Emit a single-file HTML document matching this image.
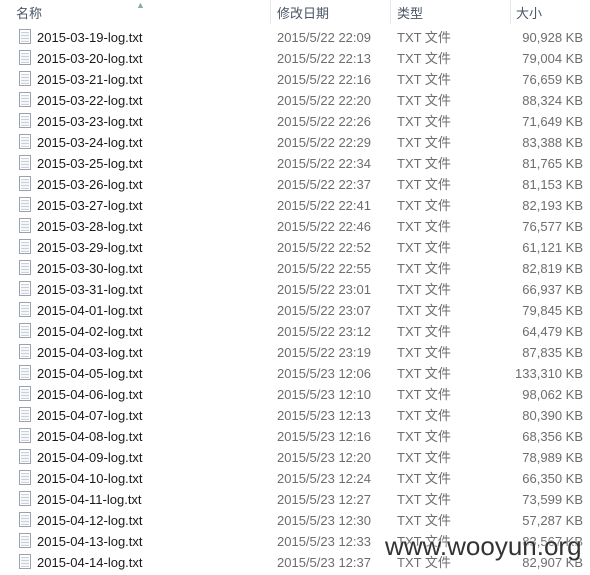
<!DOCTYPE html><html><head><style>
body{margin:0;width:590px;height:575px;background:#fff;overflow:hidden;position:relative;font-family:"Liberation Sans","Noto Sans CJK SC",sans-serif;font-size:13px}
.h{position:absolute;top:6px;color:#4a5566;font-size:13px;line-height:15px}
.sep{position:absolute;top:0;width:1px;height:24px;background:#e3e8ef}
.r{position:absolute;left:0;width:590px;height:21px}
.r span{position:absolute;top:3px;white-space:nowrap;line-height:15px}
.n{left:37px;color:#1a1a1a}.d{left:277px;color:#6d6d6d}.t{left:397px;color:#6d6d6d}.s{right:7px;color:#6d6d6d}
.ic{position:absolute;left:19px;top:2px;width:12px;height:15px;border:1px solid #9aa3ad;background:repeating-linear-gradient(#f4f6f8 0 2px,#c9d2dc 2px 3px);background-clip:content-box;padding:2px 1px 1px 1px;box-sizing:border-box}
.wm{position:absolute;left:385px;top:531px;font-size:26px;line-height:30px;color:#333;text-shadow:0 0 2px #fff,0 0 2px #fff;font-family:"Liberation Sans",sans-serif}
</style></head><body>
<div class="h" style="left:16px">名称</div>
<div style="position:absolute;left:136px;top:0;font-size:9px;color:#8aa">&#9650;</div>
<div class="sep" style="left:270px"></div><div class="h" style="left:277px">修改日期</div>
<div class="sep" style="left:390px"></div><div class="h" style="left:397px">类型</div>
<div class="sep" style="left:510px"></div><div class="h" style="left:516px">大小</div>
<div id="rows"></div>
<div class="wm">www.wooyun.org</div>
<script>
var d=[["03-19","22 22:09","90,928"],["03-20","22 22:13","79,004"],["03-21","22 22:16","76,659"],["03-22","22 22:20","88,324"],["03-23","22 22:26","71,649"],["03-24","22 22:29","83,388"],["03-25","22 22:34","81,765"],["03-26","22 22:37","81,153"],["03-27","22 22:41","82,193"],["03-28","22 22:46","76,577"],["03-29","22 22:52","61,121"],["03-30","22 22:55","82,819"],["03-31","22 23:01","66,937"],["04-01","22 23:07","79,845"],["04-02","22 23:12","64,479"],["04-03","22 23:19","87,835"],["04-05","23 12:06","133,310"],["04-06","23 12:10","98,062"],["04-07","23 12:13","80,390"],["04-08","23 12:16","68,356"],["04-09","23 12:20","78,989"],["04-10","23 12:24","66,350"],["04-11","23 12:27","73,599"],["04-12","23 12:30","57,287"],["04-13","23 12:33","83,567"],["04-14","23 12:37","82,907"]];
var h="";d.forEach(function(x,i){h+='<div class="r" style="top:'+(27+i*21)+'px"><div class="ic"></div><span class="n">2015-'+x[0]+'-log.txt</span><span class="d">2015/5/'+x[1]+'</span><span class="t">TXT 文件</span><span class="s">'+x[2]+' KB</span></div>'});
document.getElementById("rows").innerHTML=h;
</script>
</body></html>
